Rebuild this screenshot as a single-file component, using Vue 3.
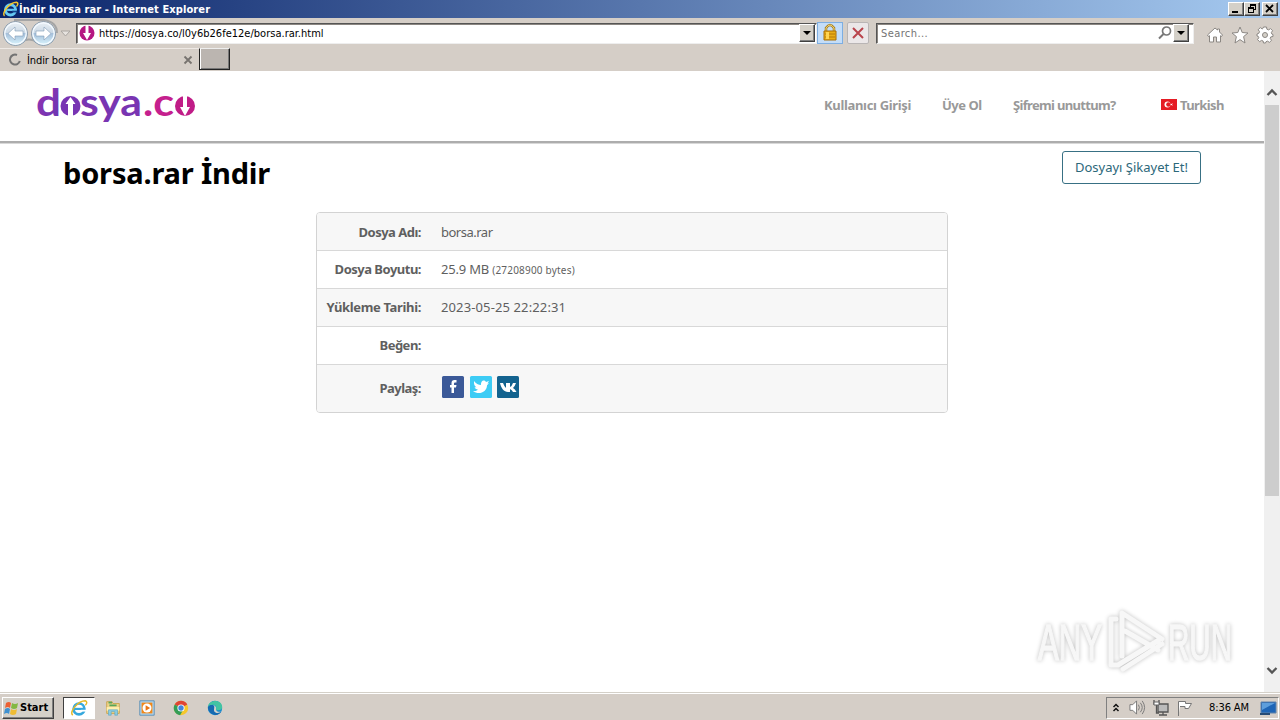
<template>
  <div class="desktop">
    <header class="titlebar">
      <svg class="ie-small" viewBox="0 0 20 20">
        <circle cx="10" cy="11" r="6" fill="none" stroke="#65c9f3" stroke-width="3.4" />
        <path d="M6 11h10" stroke="#65c9f3" stroke-width="2.6" />
        <path d="M12 13h6" stroke="#15438e" stroke-width="2" />
        <path d="M3 18C-1 15 9 2 17 2c3 1 1 4 0 5" fill="none" stroke="#f4c62d" stroke-width="1.8" />
      </svg>
      <span class="window-title">İndir borsa rar - Internet Explorer</span>
      <div class="window-buttons">
        <span class="win-btn"><svg viewBox="0 0 14 12"><path d="M3 8h6v2H3z" /></svg></span>
        <span class="win-btn"><svg viewBox="0 0 14 12" shape-rendering="crispEdges"><path d="M5 1h6v6H9V6h1V3H6v1H5zM3 4h6v6H3zM4 6v3h4V6z" fill-rule="evenodd" /></svg></span>
        <span class="win-btn close"><svg viewBox="0 0 14 12"><path d="M3 2l7 7M10 2L3 9" stroke="#000" stroke-width="1.8" /></svg></span>
      </div>
    </header>

    <div class="toolbar">
      <svg class="nav-buttons" viewBox="0 0 74 30">
        <defs>
          <linearGradient id="nav" x2="0" y2="1">
            <stop offset="0" stop-color="#edf2f6" />
            <stop offset=".48" stop-color="#c9d7e4" />
            <stop offset=".5" stop-color="#a5bfda" />
            <stop offset="1" stop-color="#dcf7ff" />
          </linearGradient>
        </defs>
        <path d="M14 2h30q13 2 13 13M20 25q9-7 18 0" fill="none" stroke="#a5a5a5" stroke-width="2" />
        <g v-for="x in [15.500, 43.500]" :key="x">
          <circle :cx="x" cy="15.500" r="12" fill="url(#nav)" stroke="#8798a9" />
          <circle :cx="x" cy="15.500" r="10.700" fill="none" stroke="#f4faff" stroke-width="1.300" />
        </g>
        <path d="M8 15.500l7-6.500v4h8v5h-8v4z" fill="#fff" stroke="#819bb5" stroke-width=".6" />
        <path d="M51 15.500L44 9v4h-8v5h8v4z" fill="#fff" stroke="#819bb5" stroke-width=".6" />
        <path d="M61 13h9l-4.500 5z" fill="#e7e3df" stroke="#aaa6a1" />
      </svg>
      <div class="address">
        <svg class="site-icon" viewBox="0 0 16 16">
          <circle cx="8" cy="8" r="7.500" fill="#b51782" />
          <path d="M6.500 0h3v8H12l-4 7-4-7h2.500z" fill="#fff" />
        </svg>
        <span class="url">https://dosya.co/l0y6b26fe12e/borsa.rar.html</span>
        <span class="drop"></span>
      </div>
      <div class="tool lock">
        <svg viewBox="0 0 24 20">
          <path d="M8 9V5q4-6 8 0v4" fill="none" stroke="#a47b20" stroke-width="2.500" />
          <path d="M8 9V5q4-6 8 0v4" fill="none" stroke="#f0d774" />
          <path d="M6 8h12v9H6z" fill="#e9ad16" stroke="#a86f08" />
          <path d="M7 11h10M7 14h10" stroke="#b77808" />
          <path d="M8 9h3v7H8z" fill="#ffd451" />
        </svg>
      </div>
      <div class="tool stop">
        <svg viewBox="0 0 20 20"><path d="M5 5l10 10M15 5L5 15" stroke="#b9444c" stroke-width="2" /></svg>
      </div>
      <div class="search">
        <span>Search...</span>
        <svg viewBox="0 0 16 16"><circle cx="9.500" cy="6" r="4" fill="none" stroke="#777" stroke-width="1.700" /><path d="M6.500 9L2 13.500" stroke="#777" stroke-width="2" /></svg>
        <span class="drop"></span>
      </div>
      <div class="commands">
        <svg viewBox="0 0 18 18"><path d="M1.500 9L9 2l2.500 2V3h2v3L16.500 9l-1 1.500-1-.8V16h-4v-5h-3v5h-4V9.700l-1 .8z" /></svg>
        <svg viewBox="0 0 18 18"><path d="M9 1l2.200 5.500L17 7l-4.400 3.600L14 17l-5-3.400L4 17l1.400-6.400L1 7l5.800-.5z" /></svg>
        <svg viewBox="0 0 18 18">
          <path d="M7.500 1h3l.4 2.200 1.700.7 1.900-1.300 2.100 2.100-1.300 1.900.6 1.500L17 8.500v2l-2.200.4-.6 1.500 1.300 1.900-2.100 2.100-1.900-1.300-1.500.6L9.500 17h-2l-.4-2-1.600-.6-1.900 1.300-2.100-2.100 1.300-1.900-.6-1.400L1 10V8l1.800-.7.7-1.700-1.300-1.900 2.100-2.100 1.900 1.300L7 2.300z" />
          <circle cx="9" cy="9" r="2.500" fill="#d4d0c8" />
        </svg>
      </div>
    </div>

    <div class="tabs">
      <div class="tab">
        <svg class="spinner" viewBox="0 0 14 14"><path d="M9 2a5 5 0 1 0 2.800 6" fill="none" stroke="#737373" stroke-width="2" /></svg>
        <span>İndir borsa rar</span>
        <svg class="tab-close" viewBox="0 0 10 10"><path d="M1.500 1.500l7 7M8.500 1.500l-7 7" stroke="#77736f" stroke-width="1.800" /></svg>
      </div>
      <div class="new-tab"></div>
    </div>

    <div class="viewport">
      <div class="page">
        <nav class="site-head">
          <svg class="logo" viewBox="0 0 164 46">
            <defs>
              <linearGradient id="violet" x1="0" x2="1" y2="1">
                <stop offset="0" stop-color="#9a31b0" />
                <stop offset="1" stop-color="#6538b3" />
              </linearGradient>
            </defs>
            <g class="logo-text">
              <text x="0" y="31" fill="url(#violet)" textLength="25" lengthAdjust="spacingAndGlyphs">d</text>
              <text x="44" y="31" fill="#7935b2" textLength="62" lengthAdjust="spacingAndGlyphs">sya</text>
              <text x="107" y="31" fill="#c5208e" textLength="31" lengthAdjust="spacingAndGlyphs">.c</text>
            </g>
            <circle cx="34.500" cy="21" r="10" fill="#7834b3" />
            <path d="M34.500 12l-5 7h2.500v12h5V19h2.500z" fill="#fff" />
            <circle cx="149" cy="21" r="10" fill="#c01c87" />
            <path d="M147 10h4v12h3l-5 9-5-9h3z" fill="#fff" />
          </svg>
          <div class="menu">
            <a class="login">Kullanıcı Girişi</a>
            <a class="join">Üye Ol</a>
            <a class="forgot">Şifremi unuttum?</a>
            <a class="language">
              <svg viewBox="0 0 16 11"><path d="M0 0h16v11H0z" fill="#e51c24" /><circle cx="6.500" cy="5.500" r="3" fill="#fff" /><circle cx="7.500" cy="5.500" r="2.300" fill="#e51c24" /><path d="M9 5.500l3-1.300-1 1.300 1 1.300z" fill="#fff" /></svg>
              <span>Turkish</span>
            </a>
          </div>
        </nav>

        <main>
          <div class="heading">
            <h1>borsa.rar İndir</h1>
            <button class="report">Dosyayı Şikayet Et!</button>
          </div>
          <div class="file-info">
            <div v-for="row in rows" :key="row.label" class="row">
              <strong :class="row.key">{{ row.label }}</strong>
              <div class="value" :class="row.key">{{ row.value }}<small v-if="row.bytes">{{ row.bytes }}</small></div>
            </div>
            <div class="row share">
              <strong>Paylaş:</strong>
              <div class="socials">
                <svg viewBox="0 0 24 24"><rect x="1" y="1" width="22" height="22" rx="1.500" fill="#3b5998" /><path d="M13 18v-5.500h2l.5-2.500H13V8.500q0-1 1-1h1.500V5H13.500q-3 0-3 3v2H9v2.500h1.500V18z" fill="#fff" /></svg>
                <svg viewBox="0 0 24 24"><rect x="1" y="1" width="22" height="22" rx="1.500" fill="#3dccf5" /><path d="M5 6q3 4 7 4c-.5-4 3-6 5-3l3-1-1.500 2.500 1.500-.3-2 2c0 7-8 10-14 6q3 0 5-1.500-3-.6-3.500-2.500h2q-3-1.500-2.500-6" fill="#fff" /></svg>
                <svg viewBox="0 0 24 24"><rect x="1" y="1" width="22" height="22" rx="1.500" fill="#13638f" /><path d="M4 8h3q1.500 4 3 5V8h4v4q2-1 3-4h3q-1 3-3 5 2 1 3.500 4H17q-1-2-3-3v3h-2C8 17 5 13 4 8z" fill="#fff" /></svg>
              </div>
            </div>
          </div>
        </main>
      </div>
      <aside class="scrollbar">
        <svg viewBox="0 0 16 16"><path d="M3.500 10L8 5.500l4.500 4.500" /></svg>
        <div class="thumb"></div>
        <svg class="down" viewBox="0 0 16 16"><path d="M3.500 6L8 10.500 12.500 6" /></svg>
      </aside>
      <svg class="watermark" viewBox="0 0 204 72">
        <g class="watermark-text">
          <text x="5" y="54" textLength="64" lengthAdjust="spacingAndGlyphs">ANY</text>
          <text x="135" y="54" textLength="64" lengthAdjust="spacingAndGlyphs">RUN</text>
        </g>
        <path d="M83 13h-5v46h7l41-25M89 50V7l40 26M92 25l33 19M90 63l39-25" />
      </svg>
    </div>

    <footer class="taskbar">
      <button class="start">
        <svg viewBox="0 0 16 16"><path d="M2 3q3-2 5 0L6 8Q4 6 1 8z" fill="#ec6134" /><path d="M8 3q3 2 6 0l-1 5q-3 2-6 0z" fill="#83b842" /><path d="M1 9q3-2 5 0l-1 5q-2-2-5 0z" fill="#3f91d1" /><path d="M7 9q3 2 6 0l-1 5q-3 2-6 0z" fill="#eebc35" /></svg>
        <span>Start</span>
      </button>
      <div class="apps">
        <span class="app active">
          <svg viewBox="0 0 20 20"><circle cx="10" cy="11" r="6" fill="none" stroke="#36a8dd" stroke-width="3" /><path d="M5 11h11" stroke="#36a8dd" stroke-width="2.400" /><path d="M12 13h6" stroke="#fff" stroke-width="2" /><path d="M3 18C-1 14 9 2 17 2c3 1 1 4 0 5" fill="none" stroke="#e4b929" stroke-width="1.600" /></svg>
        </span>
        <span class="app">
          <svg viewBox="0 0 20 20"><path d="M3 3h6l1 2h7v11H3z" fill="#edd38a" stroke="#c9a44d" /><path d="M5 4h4M6 7h8" stroke="#56a55b" stroke-width="2" /><path d="M3 9h14v4H3z" fill="#fff0af" /><path d="M5 18v-6h10v6h-3v-4H8v4z" fill="#8ccce2" stroke="#5da7c4" stroke-width=".7" /></svg>
        </span>
        <span class="app">
          <svg viewBox="0 0 20 20"><path d="M2 2h16v16H2z" fill="#b2d4ec" stroke="#588db4" /><path d="M4 4h12v12H4z" fill="#f08719" /><circle cx="10" cy="10" r="5" fill="#fff" /><path d="M8.500 7l5 3-5 3z" fill="#e87514" /></svg>
        </span>
        <span class="app">
          <svg viewBox="0 0 20 20"><circle cx="10" cy="10" r="8" fill="#f5c72b" /><path d="M10 10L3 6a8 8 0 0 1 14 0z" fill="#df4435" /><path d="M10 10l-7-4a8 8 0 0 0 6 12l4-7z" fill="#349d57" /><circle cx="10" cy="10" r="4" fill="#fff" /><circle cx="10" cy="10" r="3" fill="#4384dc" /></svg>
        </span>
        <span class="app">
          <svg viewBox="0 0 20 20"><circle cx="10" cy="10" r="8" fill="#148bd0" /><path d="M2 9C3 0 18 0 18 9c0 5-7 4-7 2 2-4-4-7-9-2" fill="#43c4a2" /><path d="M2 9c4-5 9-1 7 2-1 4 4 6 8 3-3 6-14 5-15-5" fill="#176ab1" /><path d="M9 11c-1 4 4 6 8 3-4 1-6-1-6-3 1-2-1-4-3-4 2 1 1 3 1 4" fill="#d4d0c8" /></svg>
        </span>
      </div>
      <div class="tray">
        <svg class="chevrons" viewBox="0 0 8 12"><path d="M1.500 5L4 2.500 6.500 5M1.500 9L4 6.500 6.500 9" fill="none" stroke="#111" stroke-width="1.500" /></svg>
        <svg class="speaker" viewBox="0 0 18 18"><path d="M1 6h3l4-4v14l-4-4H1z" fill="#fff" stroke="#777" /><path d="M10 6q2 3 0 6M12 4q4 5 0 10M14 2q5 7 0 14" fill="none" stroke="#777" /></svg>
        <svg class="network" viewBox="0 0 18 18"><path d="M6 5h10v8H6z" fill="#bbb" stroke="#555" stroke-width="1.300" /><path d="M7 16h8M11 13v3M2 1v4h5V1M4.500 5v9H7" fill="none" stroke="#555" stroke-width="1.300" /><path d="M2 3h5v3H2z" fill="#fff" stroke="#666" /></svg>
        <svg class="flag" viewBox="0 0 18 18"><path d="M2.500 17V2.500h7v2h6l-3 5H9v-2H4" fill="#fff" stroke="#777" /></svg>
        <time>8:36 AM</time>
        <svg class="monitor" viewBox="0 0 18 16"><path d="M2 2h15v11H2z" fill="#1e65b6" stroke="#6084ab" /><path d="M3 3h13L3 10z" fill="#5d9edc" /><path d="M1 14h10" stroke="#274c76" stroke-width="2" /></svg>
      </div>
    </footer>
  </div>
</template>

<script setup>
const rows = [
  { key: 'name', label: 'Dosya Adı:', value: 'borsa.rar' },
  { key: 'size', label: 'Dosya Boyutu:', value: '25.9 MB ', bytes: '(27208900 bytes)' },
  { key: 'date', label: 'Yükleme Tarihi:', value: '2023-05-25 22:22:31' },
  { key: 'like', label: 'Beğen:', value: '' },
]
</script>

<style>
body {
  margin: 0;
  overflow: hidden;
}
</style>

<style scoped>
* {
  box-sizing: border-box;
}

svg {
  display: block;
  flex: none;
}

.desktop {
  width: 1280px;
  height: 720px;
  display: flex;
  flex-direction: column;
  overflow: hidden;
  background: #d4d0c8;
  color: #000;
  font: 11px/14px "DejaVu Sans Condensed", "DejaVu Sans", sans-serif;
}

.titlebar {
  height: 18px;
  flex: none;
  display: flex;
  align-items: center;
  padding: 0 2px;
  background: linear-gradient(90deg, #0a246a, #a6caf0);
  color: #fff;
}

.ie-small {
  width: 17px;
  height: 18px;
}

.window-title {
  padding-top: 1px;
  font-weight: bold;
  letter-spacing: .1px;
  white-space: nowrap;
}

.window-buttons {
  display: flex;
  margin-left: auto;
}

.win-btn {
  width: 16px;
  height: 14px;
  background: #d4d0c8;
  border: 1px solid;
  border-color: #fff #404040 #404040 #fff;
  box-shadow: inset -1px -1px #808080;
}

.win-btn svg {
  width: 14px;
  height: 12px;
}

.close {
  margin-left: 2px;
}

.toolbar {
  height: 30px;
  flex: none;
  display: flex;
  align-items: center;
  background: #d5cec7;
}

.nav-buttons {
  width: 74px;
  height: 30px;
}

.address,
.search {
  height: 21px;
  display: flex;
  align-items: center;
  background: #fff;
  border: 1px solid;
  border-color: #555 #eee #eee #555;
  box-shadow: inset 1px 1px #8b8681;
}

.address {
  width: 741px;
  margin-left: 2px;
  padding-left: 2px;
}

.site-icon {
  width: 16px;
  height: 16px;
}

.url {
  margin-left: 4px;
  padding-top: 2px;
  letter-spacing: .01px;
  white-space: nowrap;
}

.drop {
  width: 16px;
  height: 18px;
  margin-left: auto;
  margin-right: 1px;
  display: grid;
  place-items: center;
  background: #d4d0c8;
  border: 1px solid;
  border-color: #fff #404040 #404040 #fff;
  box-shadow: inset -1px -1px #808080;
}

.drop::after {
  content: "";
  border: 4px solid transparent;
  border-top-color: #000;
  border-bottom: 0;
}

.tool {
  height: 22px;
  display: grid;
  place-items: center;
}

.lock {
  width: 26px;
  background: #c4ddf8;
  border: 1px solid #7daee2;
}

.lock svg {
  width: 24px;
  height: 20px;
}

.stop {
  width: 22px;
  margin-left: 4px;
  background: #ebe7e8;
  border: 1px solid #b9b5b5;
  border-radius: 2px;
}

.stop svg {
  width: 20px;
  height: 20px;
}

.search {
  width: 318px;
  margin-left: 7px;
  padding: 0 4px;
  color: #747474;
}

.search > span:first-child {
  padding-top: 2px;
  letter-spacing: .4px;
}

.search > svg {
  width: 16px;
  height: 16px;
  margin-left: auto;
}

.search .drop {
  margin: 0;
}

.commands {
  display: flex;
  gap: 7px;
  margin-left: 12px;
  padding-top: 3px;
}

.commands svg {
  width: 18px;
  height: 18px;
  fill: #fff;
  stroke: #8b8783;
}

.tabs {
  height: 23px;
  flex: none;
  display: flex;
  background: #d5cec7;
}

.tab {
  width: 199px;
  display: flex;
  align-items: center;
  padding: 0 6px 0 8px;
  border-top: 1px solid #eee9e5;
}

.spinner {
  width: 14px;
  height: 14px;
  margin-right: 5px;
}

.tab-close {
  width: 10px;
  height: 10px;
  margin-left: auto;
}

.tab span {
  padding-top: 1px;
  letter-spacing: -.1px;
}

.new-tab {
  width: 31px;
  height: 22px;
  background: #bbb5b0;
  border: 1px solid;
  border-color: #eee #222 #222 #222;
  box-shadow: inset 1px 0 #fff, inset -1px -1px #777;
}

.viewport {
  position: relative;
  height: 621px;
  flex: none;
  display: flex;
  background: #fff;
}

.page {
  flex: 1;
  color: #5f5f5f;
  font: 13px/18px "Noto Sans", "Open Sans", sans-serif;
}

.site-head {
  height: 72px;
  display: flex;
  align-items: flex-start;
  border-bottom: 2px solid #adadad;
  box-shadow: 0 1px #d8d8d8;
}

.logo {
  width: 164px;
  height: 46px;
  margin: 14px 0 0 36px;
  overflow: visible;
}

.logo-text {
  font-family: Lato, sans-serif;
  font-size: 38px;
  font-weight: 700;
}

.menu {
  display: flex;
  margin: 25px 0 0 624px;
  color: #999;
  font-weight: 700;
  white-space: nowrap;
}

.login {
  width: 118px;
  letter-spacing: -.33px;
}

.join {
  width: 71px;
  letter-spacing: -.5px;
}

.forgot {
  width: 148px;
  letter-spacing: -.67px;
}

.language {
  display: flex;
  gap: 3px;
  letter-spacing: -.6px;
}

.language svg {
  width: 16px;
  height: 11px;
  margin-top: 3px;
}

.heading {
  height: 69px;
  display: flex;
  justify-content: space-between;
  padding: 8px 63px 0;
}

h1 {
  margin: 2px 0 0;
  color: #000;
  font-size: 29px;
  font-weight: 700;
  line-height: 40px;
  letter-spacing: -.18px;
  white-space: nowrap;
}

.report {
  width: 139px;
  height: 33px;
  padding: 0 0 2px;
  background: #fff;
  border: 1px solid #387084;
  border-radius: 3px;
  color: #2c687a;
  font: inherit;
  white-space: nowrap;
}

.file-info {
  width: 632px;
  margin: 0 auto;
  border: 1px solid #d3d3d3;
  border-radius: 4px;
  overflow: hidden;
}

.row {
  height: 38px;
  display: flex;
  align-items: center;
  padding-bottom: 1px;
  border-bottom: 1px solid #d8d8d8;
  white-space: nowrap;
}

.row:first-child {
  padding-bottom: 0;
}

.row:nth-child(odd) {
  background: #f7f7f7;
}

.row > strong {
  width: 104px;
  text-align: right;
  letter-spacing: -.5px;
}

.row > strong.date {
  letter-spacing: -.35px;
}

.row > div {
  margin-left: 20px;
}

.row small {
  font-size: 10px;
  letter-spacing: .2px;
}

.value.name {
  letter-spacing: -.5px;
}

.value.size {
  letter-spacing: -.2px;
}

.value.date {
  letter-spacing: .12px;
}

.share {
  height: 47px;
  border-bottom: 0;
}

.socials {
  display: flex;
  gap: 4px;
  padding-bottom: 2px;
}

.socials svg {
  width: 24px;
  height: 24px;
}

.socials svg:last-child {
  margin-left: -1px;
}

.scrollbar {
  width: 16px;
  display: flex;
  flex-direction: column;
  padding: 14px 0;
  background: #f0f0f0;
}

.scrollbar svg {
  width: 16px;
  height: 16px;
  fill: none;
  stroke: #555;
  stroke-width: 2.3px;
}

.thumb {
  height: 391px;
  margin: 4px 1px 0;
  background: #cdcdcd;
}

.scrollbar .down {
  margin-top: auto;
}

.watermark {
  position: absolute;
  left: 1033px;
  top: 535px;
  width: 204px;
  height: 72px;
  overflow: visible;
  filter: drop-shadow(0 0 2px #c0c0c0);
}

.watermark-text {
  fill: #f7f7f7;
  font: 400 50px "Liberation Sans", sans-serif;
  stroke: #f7f7f7;
  stroke-width: 1.5px;
}

.watermark path {
  fill: none;
  stroke: #f7f7f7;
  stroke-width: 5px;
  stroke-linecap: round;
  stroke-linejoin: round;
}

.taskbar {
  height: 28px;
  flex: none;
  display: flex;
  align-items: center;
  padding: 2px 1px 0 2px;
  border-top: 1px solid #d4d0c8;
  box-shadow: inset 0 1px #fff;
  background: #d5cec7;
}

.start {
  width: 52px;
  height: 22px;
  display: flex;
  align-items: center;
  padding: 0 1px;
  background: #d4d0c8;
  border: 1px solid;
  border-color: #fff #404040 #404040 #fff;
  box-shadow: inset -1px -1px #808080;
  font: bold 11px "DejaVu Sans Condensed", sans-serif;
}

.start svg {
  width: 16px;
  height: 16px;
}

.apps {
  display: flex;
  gap: 2px;
  margin-left: 9px;
}

.app {
  width: 32px;
  height: 22px;
  display: grid;
  place-items: center;
}

.app svg {
  width: 18px;
  height: 18px;
}

.active {
  background: #fff;
  border: 1px solid;
  border-color: #404040 #fff #fff #404040;
}

.tray {
  width: 173px;
  height: 22px;
  display: flex;
  align-items: center;
  margin-left: auto;
  padding: 0 1px 0 5px;
  border: 1px solid;
  border-color: #808080 #fff #fff #808080;
}

.chevrons {
  width: 8px;
  height: 12px;
}

.speaker {
  width: 17px;
  height: 17px;
  margin-left: 9px;
}

.network {
  width: 18px;
  height: 18px;
  margin-left: 6px;
}

.flag {
  width: 18px;
  height: 18px;
  margin-left: 6px;
}

time {
  margin-left: 15px;
  letter-spacing: -.1px;
  white-space: nowrap;
}

.monitor {
  width: 18px;
  height: 16px;
  margin-left: auto;
}
</style>
